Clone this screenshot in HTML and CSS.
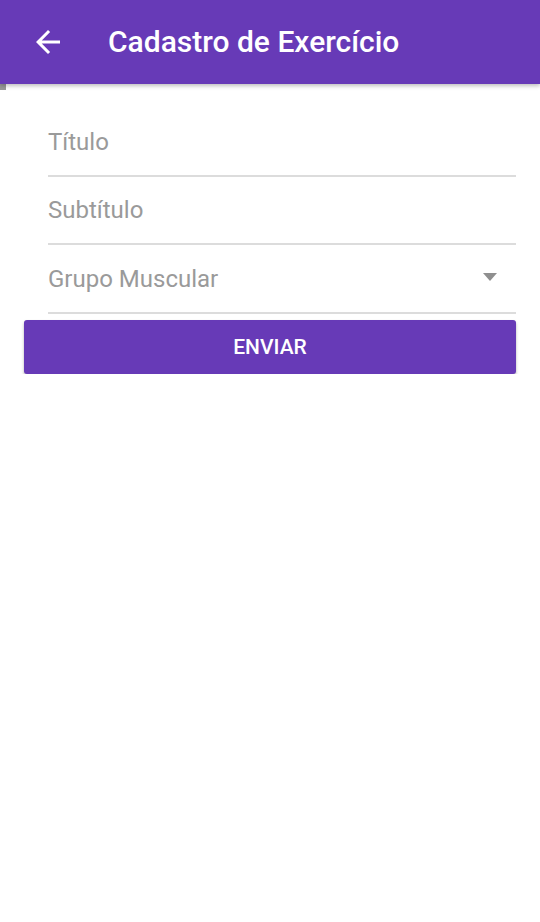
FILE: index.html
```html
<!DOCTYPE html>
<html lang="pt">
<head>
<meta charset="utf-8">
<link rel="stylesheet" href="styles.css">
</head>
<body>
<header class="appbar">
  <button class="back" aria-label="Voltar">
    <svg width="36" height="36" viewBox="0 0 24 24"><path d="M20 11H7.83l5.59-5.59L12 4l-8 8 8 8 1.41-1.41L7.83 13H20v-2z" fill="#fff"/></svg>
  </button>
  <h1 class="title">Cadastro de Exercício</h1>
</header>
<div class="scroll-mark"></div>
<main class="form">
  <div class="field"><span class="placeholder">Título</span></div>
  <div class="field"><span class="placeholder">Subtítulo</span></div>
  <div class="field select"><span class="placeholder">Grupo Muscular</span><span class="caret"></span></div>
  <button class="submit">ENVIAR</button>
</main>
</body>
</html>
```
FILE: styles.css
```css
html, body { margin: 0; padding: 0; background: #fff; font-family: Roboto, "Noto Sans", sans-serif; }
.appbar {
  height: 84px;
  background: #673ab7;
  display: flex;
  align-items: center;
  box-shadow: 0 2px 4px rgba(0,0,0,0.25);
  position: relative;
  z-index: 1;
}
.back {
  background: none; border: 0; padding: 0;
  width: 36px; height: 36px;
  margin-left: 30px;
  display: flex;
}
.title {
  margin: 0 0 2px 42px;
  color: #fff;
  font-size: 30px;
  font-weight: 500;
}
.scroll-mark { width: 6px; height: 6px; background: #999; }
.form {
  padding: 19px 24px 0 24px;
  display: flex;
  flex-direction: column;
}
.field {
  margin-left: 24px;
  height: 66px;
  border-bottom: 2px solid #dcdcdc;
  display: flex;
  align-items: center;
  justify-content: space-between;
}
.field.select { height: 67px; }
.placeholder { color: #9a9a9a; font-size: 24px; }
.caret {
  width: 0; height: 0;
  border-left: 7.5px solid transparent;
  border-right: 7.5px solid transparent;
  border-top: 8px solid #8f8f8f;
  margin-right: 19px;
  margin-top: -4px;
}
.submit {
  margin-top: 6px;
  height: 54px;
  border: 0;
  border-radius: 3px;
  background: #673ab7;
  color: #fff;
  font-family: Roboto, sans-serif;
  font-size: 21px;
  font-weight: 500;
  box-shadow: 0 2px 3px rgba(0,0,0,0.3);
}
```
